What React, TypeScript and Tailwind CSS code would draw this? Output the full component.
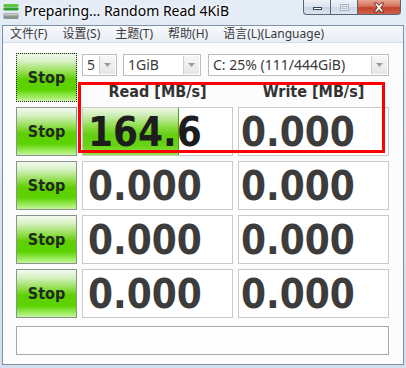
import React from "react";

const STOP_BG =
  "bg-[linear-gradient(to_bottom,#f4faef_0%,#d6f1c2_16%,#8edd48_40%,#5fcf02_54%,#5cd300_76%,#9cec5e_91%,#c6f59e_100%)]";

function StopButton({ focused }: { focused?: boolean }) {
  return (
    <div
      className={`flex items-center justify-center ${STOP_BG} border ${
        focused ? "border-dotted border-[#222]" : "border-[#8a948a]"
      }`}
    >
      <span className="font-['DejaVu_Sans_Condensed','DejaVu_Sans',sans-serif] font-bold text-[16px] text-[#1e2a1e] leading-none">
        Stop
      </span>
    </div>
  );
}

function Arrow() {
  return (
    <div className="w-[16px] h-full bg-[linear-gradient(to_bottom,#f6f6f6,#e6e6e6)] border-l border-[#cfcfcf] flex items-center justify-center">
      <svg width="7" height="4" viewBox="0 0 7 4">
        <path d="M0 0 L7 0 L3.5 4 Z" fill="#9b9b9b" />
      </svg>
    </div>
  );
}

function Combo({ text, width }: { text: string; width: string }) {
  return (
    <div className={`${width} h-[22px] border border-[#bdbdbd] bg-white flex items-stretch p-[1px]`}>
      <div className="flex-1 flex items-center pl-[3px] text-[14px] text-[#3a3a3a] font-['Noto_Sans',sans-serif] leading-none">
        {text}
      </div>
      <Arrow />
    </div>
  );
}

function Cell({ value, progress, dark, pad }: { value: string; progress?: number; dark?: boolean; pad: string }) {
  return (
    <div className="relative border border-[#c9c9c9] bg-white overflow-hidden">
      {progress !== undefined && (
        <div
          className="absolute left-0 top-0 bottom-0 bg-[linear-gradient(to_bottom,#eef8e6_0%,#c9ecae_18%,#86d93c_42%,#62cf10_58%,#66d414_80%,#8fe34c_100%)] border-r border-[#4d9a22]"
          style={{ width: `${progress}px` }}
        />
      )}
      <div
        className={`relative h-full flex items-center ${pad} font-['DejaVu_Sans_Condensed','DejaVu_Sans',sans-serif] font-bold text-[40px] leading-none ${
          dark ? "text-[#1d1d1d]" : "text-[#3c3c3c]"
        }`}
      >
        {value}
      </div>
    </div>
  );
}

export default function App() {
  return (
    <div className="relative w-[406px] h-[368px] overflow-hidden bg-[linear-gradient(to_bottom,#e4ecf6,#d3dfed)] font-['Noto_Sans',sans-serif]">
      {/* Title bar */}
      <div className="h-[25px] flex items-start">
        <div className="mt-[3px] ml-[3px]">
          <svg width="17" height="17" viewBox="0 0 17 17">
            <rect x="0.5" y="1" width="15" height="3" rx="1" fill="#56c83c" />
            <rect x="0.5" y="4.5" width="15" height="3" rx="1" fill="#2f9d2c" />
            <rect x="0.5" y="10" width="15" height="6" rx="1.5" fill="#8c9198" />
            <rect x="1" y="10.5" width="14" height="2" rx="1" fill="#c9cdd2" />
            <rect x="11" y="12.5" width="2.5" height="1.5" fill="#59d23e" />
          </svg>
        </div>
        <div className="ml-[4px] mt-[2px] text-[14px] leading-[18px] text-black [text-shadow:0_0_6px_#ffffff,0_0_3px_#ffffff]">
          Preparing... Random Read 4KiB
        </div>
        <div className="ml-auto mr-[5px] flex">
          <div className="w-[28px] h-[15px] border border-t-0 border-[#56657a] rounded-bl-[4px] bg-[linear-gradient(to_bottom,#eef3f8,#d9e2ec_50%,#c7d3e0_51%,#dbe4ee)] flex items-center justify-center">
            <div className="w-[9px] h-[3px] bg-white border border-[#3d4654] mt-[3px]" />
          </div>
          <div className="w-[27px] h-[15px] border border-t-0 border-l-0 border-[#56657a] bg-[linear-gradient(to_bottom,#eef3f8,#dde5ee_50%,#cdd7e3_51%,#dde5ee)] flex items-center justify-center">
            <div className="w-[9px] h-[7px] border border-[#a9b3bf] bg-[#e3e9f0] flex items-center justify-center">
              <div className="w-[5px] h-[3px] border border-[#b8c1cb]" />
            </div>
          </div>
          <div className="w-[43px] h-[15px] border border-t-0 border-l-0 border-[#56657a] rounded-br-[4px] bg-[linear-gradient(to_bottom,#e8a593,#d4705c_45%,#c2412b_55%,#d2624b)] flex items-center justify-center">
            <svg width="14" height="11" viewBox="0 0 14 11">
              <path
                d="M2 1 L5 1 L7 3.5 L9 1 L12 1 L8.7 5.5 L12 10 L9 10 L7 7.5 L5 10 L2 10 L5.3 5.5 Z"
                fill="#ffffff"
                stroke="#5a2118"
                strokeWidth="0.9"
                strokeLinejoin="round"
              />
            </svg>
          </div>
        </div>
      </div>

      {/* Client area */}
      <div className="mx-[2px] h-[340px] border border-[#7f90a6] bg-[#fcfcfc] flex flex-col">
        {/* Menu */}
        <div className="h-[17px] border-b border-[#d5dde7] bg-[linear-gradient(to_bottom,#f7f9fc,#e8eef5)] flex items-center pl-[7px] gap-[15px] text-[12px] leading-none text-[#3a3a3a] font-['Noto_Sans','Noto_Sans_CJK_SC',sans-serif]">
          <span>文件(F)</span>
          <span>设置(S)</span>
          <span>主题(T)</span>
          <span>帮助(H)</span>
          <span>语言(L)(Language)</span>
        </div>

        {/* Content */}
        <div className="pt-[10px] pl-[13px]">
          <div className="grid grid-cols-[61px_151px_151px] grid-rows-[repeat(5,49px)] gap-[5px]">
            <StopButton focused />
            <div className="col-span-2 flex flex-col">
              <div className="mt-[1px] flex">
                <Combo text="5" width="w-[35px]" />
                <div className="ml-[6px]">
                  <Combo text="1GiB" width="w-[78px]" />
                </div>
                <div className="ml-[7px]">
                  <Combo text="C: 25% (111/444GiB)" width="w-[181px]" />
                </div>
              </div>
              <div className="mt-[6px] grid grid-cols-2 gap-[5px] font-['DejaVu_Sans_Condensed','DejaVu_Sans',sans-serif] font-bold text-[16px] leading-[20px] text-[#333333] text-center">
                <div>Read [MB/s]</div>
                <div>Write [MB/s]</div>
              </div>
            </div>

            <StopButton />
            <Cell value="164.6" progress={96} dark pad="pl-[5px]" />
            <Cell value="0.000" pad="pl-[2px]" />

            <StopButton />
            <Cell value="0.000" pad="pl-[5px]" />
            <Cell value="0.000" pad="pl-[2px]" />

            <StopButton />
            <Cell value="0.000" pad="pl-[5px]" />
            <Cell value="0.000" pad="pl-[2px]" />

            <StopButton />
            <Cell value="0.000" pad="pl-[5px]" />
            <Cell value="0.000" pad="pl-[2px]" />
          </div>
          <div className="mt-[8px] w-[373px] h-[29px] border border-[#a8a8a8] bg-[#fdfdfd]" />
        </div>
      </div>

      {/* Red annotation rectangle */}
      <div className="absolute left-[78px] top-[82px] w-[307px] h-[71px] border-[3px] border-[#ff0000] pointer-events-none" />
    </div>
  );
}
